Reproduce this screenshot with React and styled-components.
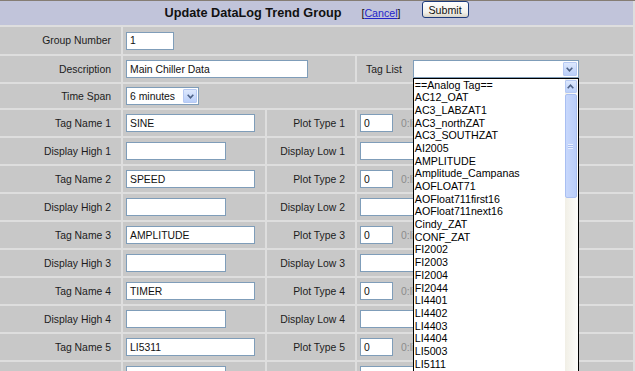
import React from "react";
import styled, { createGlobalStyle } from "styled-components";

const GlobalStyle = createGlobalStyle`
  html, body {
    margin: 0;
    padding: 0;
    background: #dedede;
    overflow: hidden;
  }
  body {
    font-family: "Liberation Sans", Arial, sans-serif;
    font-size: 10.4px;
    color: #1c1c1c;
  }
`;

const Page = styled.div`
  width: 635px;
  height: 371px;
  overflow: hidden;
  border-top: 1px solid #857d74;
  box-sizing: border-box;
`;

const Grid = styled.div`
  display: grid;
  grid-template-columns: 121px 142px 88px 276px;
  grid-template-rows: 24px 27px 26px 24px;
  grid-auto-rows: 26px;
  gap: 2px;
  padding-right: 2px;
  background: #dedede;
`;

const Header = styled.div`
  grid-column: 1 / -1;
  background: #c1c4da;
  display: flex;
  justify-content: center;
  align-items: center;
`;

const Title = styled.span`
  font-size: 12.7px;
  font-weight: bold;
  color: #111;
`;

const CancelWrap = styled.span`
  margin-left: 20px;
  font-size: 10.67px;
  color: #111;
`;

const CancelLink = styled.a`
  color: #2424c8;
  text-decoration: underline;
  cursor: pointer;
`;

const SubmitButton = styled.button`
  align-self: flex-start;
  margin: 0 0 0 21px;
  width: 47px;
  height: 17px;
  padding: 0;
  font-family: inherit;
  font-size: 10.67px;
  color: #111;
  border: 1px solid #1d3b7a;
  border-radius: 3px;
  background: linear-gradient(#ffffff, #f1f0ea 70%, #d8d3c6);
`;

const Cell = styled.div`
  background: #c8c8c8;
  display: flex;
  align-items: center;
  grid-column: ${(p) => p.$span || "auto"};
  ${(p) => (p.$label ? "justify-content: flex-end; padding-right: 10px;" : "padding-left: 3px;")}
`;

const TagListCell = styled(Cell)`
  padding-left: 9px;
  position: relative;
`;

const TextInput = styled.div`
  box-sizing: border-box;
  width: ${(p) => p.$w}px;
  height: 18px;
  border: 1px solid #7f9db9;
  background: #fff;
  padding-left: 3px;
  display: flex;
  align-items: center;
  white-space: nowrap;
  color: #111;
`;

const SelectBox = styled.div`
  box-sizing: border-box;
  width: ${(p) => p.$w}px;
  height: 18px;
  border: 1px solid #7f9db9;
  background: #fff;
  display: flex;
  align-items: center;
  padding-left: 3px;
  color: #111;
  position: relative;
`;

const SelectText = styled.span`
  flex: 1;
`;

const ArrowButton = styled.span`
  width: 14px;
  height: 14px;
  margin-right: 1px;
  box-sizing: border-box;
  border: 1px solid #b6c9f3;
  border-radius: 1px;
  background: linear-gradient(#dde8fd, #bacff9);
  display: flex;
  align-items: center;
  justify-content: center;
`;

const Hint = styled.span`
  margin-left: 8px;
  color: #8c8c8c;
  white-space: nowrap;
`;

const TagListLabel = styled.span`
  margin-right: 11px;
`;

const SelectWrap = styled.div`
  position: relative;
`;

const ListBox = styled.div`
  position: absolute;
  top: 100%;
  left: 0;
  width: 166px;
  height: 300px;
  box-sizing: border-box;
  border: 1px solid #000;
  background: #fff;
  display: flex;
  z-index: 2;
`;

const Options = styled.div`
  flex: 1;
  padding-left: 1px;
  margin-top: -0.5px;
  font-size: 10.67px;
  line-height: 12.68px;
  color: #000;
  white-space: nowrap;
  overflow: hidden;
`;

const ScrollBar = styled.div`
  width: 13px;
  background: linear-gradient(90deg, #f1efe6, #fdfdfb);
  display: flex;
  flex-direction: column;
  padding-top: 1px;
`;

const ScrollUp = styled.div`
  height: 13px;
  margin: 0 1px 1px 0;
  box-sizing: border-box;
  border: 1px solid #b6c9f3;
  border-radius: 1px;
  background: linear-gradient(#dde8fd, #bacff9);
  display: flex;
  align-items: center;
  justify-content: center;
`;

const Thumb = styled.div`
  height: 104px;
  margin-right: 1px;
  box-sizing: border-box;
  border: 1px solid #a9bff2;
  border-radius: 2px;
  background: linear-gradient(90deg, #c8d8fc, #b9cdf9);
  display: flex;
  align-items: center;
  justify-content: center;
`;

const Grip = styled.div`
  width: 5px;
  height: 5px;
  background: repeating-linear-gradient(#e8effd 0 1px, #a9bff2 1px 2px);
`;

const Chevron = ({ up }) => (
  <svg width="7" height="5" viewBox="0 0 7 5">
    <path
      d={up ? "M0.7 4.2 L3.5 1.2 L6.3 4.2" : "M0.7 0.8 L3.5 3.8 L6.3 0.8"}
      stroke="#4d6185"
      strokeWidth="1.6"
      fill="none"
    />
  </svg>
);

const tags = [
  "==Analog Tag==",
  "AC12_OAT",
  "AC3_LABZAT1",
  "AC3_northZAT",
  "AC3_SOUTHZAT",
  "AI2005",
  "AMPLITUDE",
  "Amplitude_Campanas",
  "AOFLOAT71",
  "AOFloat711first16",
  "AOFloat711next16",
  "Cindy_ZAT",
  "CONF_ZAT",
  "FI2002",
  "FI2003",
  "FI2004",
  "FI2044",
  "LI4401",
  "LI4402",
  "LI4403",
  "LI4404",
  "LI5003",
  "LI5111",
];

const trendTags = ["SINE", "SPEED", "AMPLITUDE", "TIMER", "LI5311"];

const TagRows = ({ n, name }) => (
  <>
    <Cell $label>Tag Name {n}</Cell>
    <Cell>
      <TextInput $w={129}>{name}</TextInput>
    </Cell>
    <Cell $label>Plot Type {n}</Cell>
    <Cell>
      <TextInput $w={33}>0</TextInput>
      <Hint>0:line 1:bar</Hint>
    </Cell>
    <Cell $label>Display High {n}</Cell>
    <Cell>
      <TextInput $w={100} />
    </Cell>
    <Cell $label>Display Low {n}</Cell>
    <Cell>
      <TextInput $w={100} />
    </Cell>
  </>
);

const App = () => {
  return (
    <Page>
      <GlobalStyle />
      <Grid>
        <Header>
          <Title>Update DataLog Trend Group</Title>
          <CancelWrap>
            [<CancelLink>Cancel</CancelLink>]
          </CancelWrap>
          <SubmitButton>Submit</SubmitButton>
        </Header>

        <Cell $label>Group Number</Cell>
        <Cell $span="2 / -1">
          <TextInput $w={48}>1</TextInput>
        </Cell>

        <Cell $label>Description</Cell>
        <Cell $span="2 / 4">
          <TextInput $w={182}>Main Chiller Data</TextInput>
        </Cell>
        <TagListCell>
          <TagListLabel>Tag List</TagListLabel>
          <SelectWrap>
            <SelectBox $w={166}>
              <SelectText />
              <ArrowButton>
                <Chevron />
              </ArrowButton>
            </SelectBox>
            <ListBox>
              <Options>
                {tags.map((t) => (
                  <div key={t}>{t}</div>
                ))}
              </Options>
              <ScrollBar>
                <ScrollUp>
                  <Chevron up />
                </ScrollUp>
                <Thumb>
                  <Grip />
                </Thumb>
              </ScrollBar>
            </ListBox>
          </SelectWrap>
        </TagListCell>

        <Cell $label>Time Span</Cell>
        <Cell $span="2 / -1">
          <SelectBox $w={73}>
            <SelectText>6 minutes</SelectText>
            <ArrowButton>
              <Chevron />
            </ArrowButton>
          </SelectBox>
        </Cell>

        {trendTags.map((name, i) => (
          <TagRows key={name} n={i + 1} name={name} />
        ))}
      </Grid>
    </Page>
  );
};

export default App;
